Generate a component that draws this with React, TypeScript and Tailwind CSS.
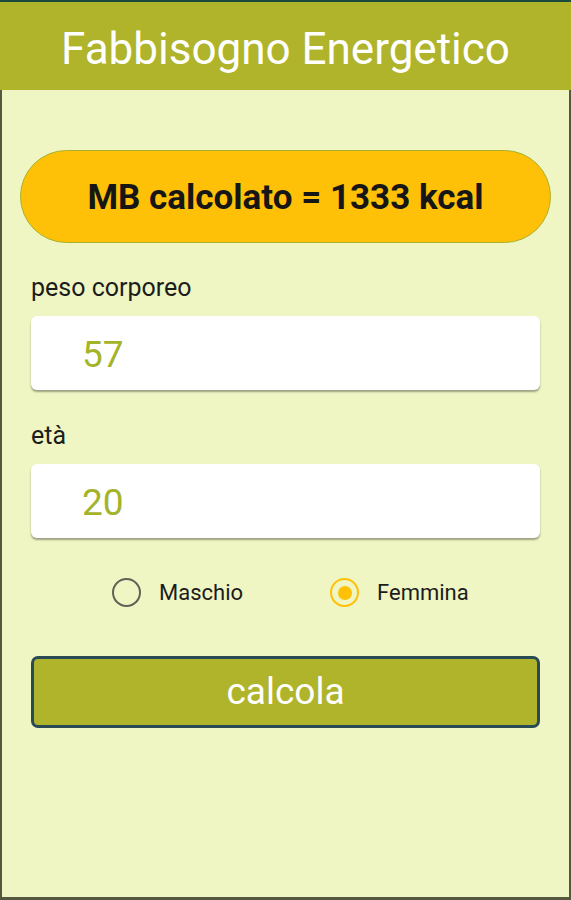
import React, { useState } from 'react';

const font = { fontFamily: 'Roboto, "Noto Sans", sans-serif' };

function Radio({ label, checked, onClick }: { label: string; checked: boolean; onClick: () => void }) {
  return (
    <button onClick={onClick} className="flex items-center gap-[18px]">
      <span
        className={`flex h-[29px] w-[29px] items-center justify-center rounded-full border-[2.5px] ${
          checked ? 'border-[#ffc107]' : 'border-[#5f6356]'
        }`}
      >
        {checked && <span className="h-[14px] w-[14px] rounded-full bg-[#ffc107]" />}
      </span>
      <span className="text-[22px] leading-[29px] text-[#1c1c1c]">{label}</span>
    </button>
  );
}

export default function App() {
  const [peso, setPeso] = useState('57');
  const [eta, setEta] = useState('20');
  const [sesso, setSesso] = useState<'M' | 'F'>('F');

  return (
    <div style={font} className="flex h-[900px] w-[571px] flex-col bg-[#1b4d3e] pt-[2px]">
      <div className="flex h-[88px] items-center justify-center bg-[#afb42b] pt-[5px] shadow-[0_2px_4px_rgba(0,0,0,0.25)]">
        <h1 className="text-[44px] leading-[66px] text-white">Fabbisogno Energetico</h1>
      </div>
      <main className="flex flex-1 flex-col border-x-[2px] border-b-[3px] border-[#55583f] bg-[#eff6c4] px-[29px] pt-[60px]">
        <div className="-mx-[11px] flex h-[93px] items-center justify-center rounded-full border border-[#a8b12e] bg-[#ffc107] pt-[4px]">
          <span className="text-[35px] font-bold text-[#161616]">MB calcolato = 1333 kcal</span>
        </div>

        <label className="mt-[30px] text-[25px] leading-[30px] text-[#1c1c1c]">peso corporeo</label>
        <input
          value={peso}
          onChange={(e) => setPeso(e.target.value)}
          className="mt-[13px] h-[74px] w-full rounded-[6px] bg-white pl-[51px] pt-[3px] text-[37px] text-[#a4b42a] shadow-[0_2px_2px_rgba(0,0,0,0.35)] outline-none"
        />

        <label className="mt-[31px] text-[25px] leading-[30px] text-[#1c1c1c]">età</label>
        <input
          value={eta}
          onChange={(e) => setEta(e.target.value)}
          className="mt-[13px] h-[74px] w-full rounded-[6px] bg-white pl-[51px] pt-[3px] text-[37px] text-[#a4b42a] shadow-[0_2px_2px_rgba(0,0,0,0.35)] outline-none"
        />

        <div className="mt-[40px] flex gap-[87px] pl-[81px]">
          <Radio label="Maschio" checked={sesso === 'M'} onClick={() => setSesso('M')} />
          <Radio label="Femmina" checked={sesso === 'F'} onClick={() => setSesso('F')} />
        </div>

        <button className="mt-[49px] flex h-[72px] w-full items-center justify-center rounded-[7px] border-[3px] border-[#284a55] bg-[#afb42b] text-[37px] text-white">
          calcola
        </button>
      </main>
    </div>
  );
}
